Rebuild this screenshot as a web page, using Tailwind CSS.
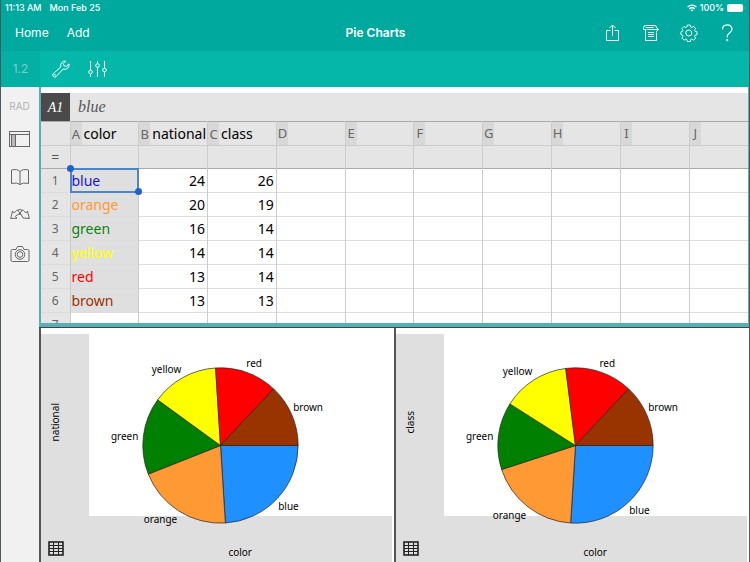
<!DOCTYPE html>
<html lang="en">
<head>
    <meta charset="UTF-8">
    <meta name="viewport" content="width=device-width, initial-scale=1.0">
    <title>Pie Charts</title>
    <script src="https://cdn.jsdelivr.net/npm/@tailwindcss/browser@4"></script>
</head>
<body class="bg-white font-['Inter','Liberation_Sans',sans-serif]">
    <div class="flex flex-col h-screen overflow-hidden border-x border-[#4a5a5a]">

        <!-- Status bar and title bar -->
        <header class="bg-[#00a99d] text-white shrink-0">
            <div class="flex items-center justify-between h-[15px] pl-1 pr-1 text-[9px] font-medium">
                <div class="flex gap-2">
                    <span>11:13 AM</span>
                    <span>Mon Feb 25</span>
                </div>
                <div class="flex items-center gap-[3px]">
                    <svg class="w-[10px] h-[8px]" viewBox="0 0 10 8" fill="none" stroke="white" stroke-width="1.4">
                        <path d="M.6 3a6.2 6.2 0 0 1 8.8 0M2.3 4.9a3.8 3.8 0 0 1 5.4 0"/>
                        <path d="M5 7.6 3.6 6.2a2 2 0 0 1 2.8 0z" fill="white" stroke="none"/>
                    </svg>
                    <span>100%</span>
                    <svg class="w-[18px] h-[8px]" viewBox="0 0 18 8">
                        <rect x="0" y="0" width="16" height="8" rx="2" fill="white"/>
                        <path d="M16.8 2.6q1.2 1.4 0 2.8z" fill="white" opacity=".6"/>
                    </svg>
                </div>
            </div>
            <div class="grid grid-cols-3 items-center h-9 pl-[14px] pr-[13px] text-[12px]">
                <nav class="flex gap-[18px]">
                    <button type="button">Home</button>
                    <button type="button">Add</button>
                </nav>
                <h1 class="text-center font-semibold">Pie Charts</h1>
                <div class="flex justify-end gap-5">
                    <button type="button" aria-label="Share">
                        <svg class="w-[18px] h-[18px]" viewBox="0 0 18 18" fill="none" stroke="white">
                            <path d="M6.5 6.5h-4v10h12v-10h-4M8.5 12V1M5.5 4l3-3 3 3"/>
                        </svg>
                    </button>
                    <button type="button" aria-label="Document">
                        <svg class="w-[18px] h-[18px]" viewBox="0 0 18 18" fill="none" stroke="white">
                            <path d="M3.5 5.500H1.500v-2q0-2 2-2h9q2 0 2 2M3.500 3.500h8M4.500 5.500h12M14 3l2.500 2.500L14 8M3.500 5.500v11h11V8.500"/>
                            <path d="M6 8.500h6M6 10.500h6M6 12.500h6"/>
                        </svg>
                    </button>
                    <button type="button" aria-label="Settings">
                        <svg class="w-[18px] h-[18px]" viewBox="0 0 18 18" fill="none" stroke="white" stroke-linejoin="round">
                            <path d="M7.400 1h3.200l.5 2.200 1.200.5 1.900-1.200 2.300 2.300-1.200 1.900.5 1.200 2.200.5v3.200l-2.200.5-.5 1.200 1.200 1.900-2.300 2.300-1.900-1.200-1.200.5-.5 2.200H7.400l-.5-2.200-1.200-.5-1.900 1.200-2.300-2.300 1.200-1.900-.5-1.200L.500 11.600V8.400l1.700-.5.5-1.200-1.200-1.900 2.300-2.300 1.900 1.200 1.200-.5z" transform="translate(.5 .1) scale(.92)"/>
                            <circle cx="8.800" cy="9" r="3"/>
                        </svg>
                    </button>
                    <button type="button" aria-label="Help">
                        <svg class="w-[18px] h-[18px]" viewBox="0 0 18 18" fill="none" stroke="white" stroke-width="1.200">
                            <path d="M4.500 5.500c0-6 9.500-6 9.500-.5 0 4-4.800 3.800-4.800 7.500v1"/>
                            <circle cx="9.200" cy="16.200" r=".5" fill="white"/>
                        </svg>
                    </button>
                </div>
            </div>
        </header>

        <!-- Tools -->
        <div class="flex items-center h-9 shrink-0 bg-[#05b7a9] text-white">
            <div class="flex items-center justify-center self-stretch w-[39px] bg-[#04afa3] text-[12px] text-white/45">1.2</div>
            <button type="button" class="ml-3" aria-label="Tools">
                <svg class="w-[18px] h-[18px]" viewBox="0 0 18 18" fill="none" stroke="white" stroke-linejoin="round">
                    <path d="M13.800 1.100a4.500 4.500 0 0 0-5 5.800L1.300 13.600a2 2 0 0 0 2.900 2.900l6.900-7.400a4.500 4.500 0 0 0 5.900-5.200l-2.800 2.500-2.300-.6-.6-2.200z"/>
                    <circle cx="3" cy="14.900" r=".4"/>
                </svg>
            </button>
            <button type="button" class="ml-[18px]" aria-label="Adjust">
                <svg class="w-[20px] h-[18px]" viewBox="0 0 20 18" fill="none" stroke="white">
                    <path d="M2.500 1v9M2.500 14v3M9.500 1v2.500M9.500 7.500V17M16.500 1v7M16.500 12v5"/>
                    <circle cx="2.500" cy="12" r="1.800"/><circle cx="9.500" cy="5.500" r="1.800"/><circle cx="16.500" cy="10" r="1.800"/>
                </svg>
            </button>
        </div>

        <div class="flex flex-1 min-h-0">
            <!-- Sidebar -->
            <aside class="flex flex-col items-center w-[38px] shrink-0 bg-[#f1f1f1] pt-[11px] pr-px">
                <button type="button" class="text-[10px] leading-4 text-[#b0b0b0]">RAD</button>
                <button type="button" class="mt-4" aria-label="Pages">
                    <svg class="block w-[22px] h-[18px]" viewBox="0 0 22 18" fill="none" stroke="#666">
                        <rect x=".5" y="1.500" width="20" height="15"/>
                        <path d="M.5 4.500h20"/>
                        <rect x="2.500" y="4.500" width="4" height="12" fill="#bbb"/>
                    </svg>
                </button>
                <button type="button" class="mt-5" aria-label="Catalog">
                    <svg class="block w-[20px] h-[18px]" viewBox="0 0 20 18" fill="none" stroke="#666">
                        <path d="M10 3.500Q7 .500 1.500 2v13.500Q7 14 10 16.500q3-2.500 8.500-1V2Q13 .500 10 3.500v13"/>
                    </svg>
                </button>
                <button type="button" class="mt-5" aria-label="Undo and redo">
                    <svg class="block w-[20px] h-[16px]" viewBox="0 0 20 16" fill="none" stroke="#666" stroke-linejoin="round">
                        <path d="M2.500 5 .7 12.500l6.300-.3-1.700-1.900Q8 7.500 11 8.200L13 12l6.300.5L17.500 5l-1.600 2Q13.500 3.500 10 3.500T4.100 7z"/>
                        <path d="M7.500 4 11 8.200M12.500 4 9 8.200"/>
                    </svg>
                </button>
                <button type="button" class="mt-[23px]" aria-label="Snapshot">
                    <svg class="block w-[20px] h-[18px]" viewBox="0 0 20 18" fill="none" stroke="#666">
                        <path d="M2.500 4.500H6l1.500-3h5l1.500 3h3.500q1.500 0 1.500 1.500v9q0 1.500-1.500 1.500h-15Q1 16.500 1 15V6q0-1.500 1.500-1.500z"/>
                        <circle cx="10" cy="9.500" r="4.800"/><circle cx="10" cy="9.500" r="2.800"/>
                    </svg>
                </button>
            </aside>

            <main class="flex flex-col flex-1 min-w-0">
                <!-- Spreadsheet -->
                <section class="flex flex-col h-[240px] shrink-0 border-l-2 border-r border-b-4 border-[#55b0b8] pt-[6px] overflow-hidden">
                    <div class="flex h-[28px] shrink-0 bg-[#e5e5e5] font-['Liberation_Serif',serif] italic">
                        <div class="flex items-center justify-center w-[29px] bg-[#4a4a4a] text-white text-[14px]">A1</div>
                        <input type="text" value="blue" aria-label="Cell A1" class="flex-1 min-w-0 pl-2 text-[16px] text-[#555] outline-none">
                    </div>
                    <div class="flex-1 min-h-0 overflow-hidden">
                        <table class="table-fixed border-collapse w-[calc(100%+10px)] font-['Noto_Sans','Open_Sans',sans-serif] text-[14px] leading-5">
                            <thead class="bg-[#e5e5e5]">
                                <tr class="h-6 border-y border-t-[#aaa] border-b-[#ccc]">
                                    <th class="w-[29px] border-r border-[#ccc]"></th>
                                    <th class="p-0 border-r border-[#ccc] font-normal"><div class="flex h-[23px] items-center"><span class="w-[11px] h-full shrink-0 flex items-center justify-center bg-[#d8d8d8] text-[13px] text-[#666]">A</span><span class="pl-[2px]">color</span></div></th>
                                    <th class="p-0 border-r border-[#ccc] font-normal"><div class="flex h-[23px] items-center"><span class="w-[11px] h-full shrink-0 flex items-center justify-center bg-[#d8d8d8] text-[13px] text-[#666]">B</span><span class="pl-[2px]">national</span></div></th>
                                    <th class="p-0 border-r border-[#ccc] font-normal"><div class="flex h-[23px] items-center"><span class="w-[11px] h-full shrink-0 flex items-center justify-center bg-[#d8d8d8] text-[13px] text-[#666]">C</span><span class="pl-[2px]">class</span></div></th>
                                    <th class="p-0 border-r border-[#ccc] font-normal"><div class="w-[11px] leading-[23px] bg-[#d8d8d8] text-[13px] text-[#666]">D</div></th>
                                    <th class="p-0 border-r border-[#ccc] font-normal"><div class="w-[11px] leading-[23px] bg-[#d8d8d8] text-[13px] text-[#666]">E</div></th>
                                    <th class="p-0 border-r border-[#ccc] font-normal"><div class="w-[11px] leading-[23px] bg-[#d8d8d8] text-[13px] text-[#666]">F</div></th>
                                    <th class="p-0 border-r border-[#ccc] font-normal"><div class="w-[11px] leading-[23px] bg-[#d8d8d8] text-[13px] text-[#666]">G</div></th>
                                    <th class="p-0 border-r border-[#ccc] font-normal"><div class="w-[11px] leading-[23px] bg-[#d8d8d8] text-[13px] text-[#666]">H</div></th>
                                    <th class="p-0 border-r border-[#ccc] font-normal"><div class="w-[11px] leading-[23px] bg-[#d8d8d8] text-[13px] text-[#666]">I</div></th>
                                    <th class="p-0 font-normal"><div class="w-[11px] leading-[23px] bg-[#d8d8d8] text-[13px] text-[#666]">J</div></th>
                                </tr>
                                <tr class="h-[23px] border-b border-[#aaa] text-[#555] divide-x divide-[#ccc]">
                                    <td class="p-0 text-center">=</td><td></td><td></td><td></td><td></td><td></td><td></td><td></td><td></td><td></td><td></td>
                                </tr>
                            </thead>
                            <tbody id="rows"></tbody>
                        </table>
                    </div>
                </section>

                <!-- Charts -->
                <section class="grid grid-cols-2 flex-1 min-h-0 border-t border-[#444]">
                    <div class="relative grid grid-cols-[48px_1fr] grid-rows-[1fr_46px] border-l-2 border-[#555] pt-[6px] pr-[2px]">
                        <div class="flex items-center justify-center bg-[#dfdfdf] pr-5 pb-[6px]">
                            <span class="[writing-mode:vertical-rl] rotate-180 font-['Noto_Sans',sans-serif] text-[10px]">national</span>
                        </div>
                        <div></div>
                        <div class="col-span-2 flex items-center bg-[#dfdfdf] pl-[7px] pt-[22px] pb-1">
                            <svg class="w-4 h-[15px]" viewBox="0 0 16 15" fill="none" stroke="#222"><rect x="1" y="1" width="14" height="13" stroke-width="1.600"/><path d="M1 4.500h14M1 7.500h14M1 10.500h14M5.500 1v13M10.500 1v13"/></svg>
                        </div>
                        <svg id="nationalChart" class="absolute inset-0 w-full h-full font-['Noto_Sans',sans-serif] text-[10px]" viewBox="0 0 354 235"></svg>
                    </div>
                    <div class="relative grid grid-cols-[48px_1fr] grid-rows-[1fr_46px] border-l-2 border-[#555] pt-[6px] pr-[2px]">
                        <div class="flex items-center justify-center bg-[#dfdfdf] pr-5 pb-[6px]">
                            <span class="[writing-mode:vertical-rl] rotate-180 font-['Noto_Sans',sans-serif] text-[10px]">class</span>
                        </div>
                        <div></div>
                        <div class="col-span-2 flex items-center bg-[#dfdfdf] pl-[7px] pt-[22px] pb-1">
                            <svg class="w-4 h-[15px]" viewBox="0 0 16 15" fill="none" stroke="#222"><rect x="1" y="1" width="14" height="13" stroke-width="1.600"/><path d="M1 4.500h14M1 7.500h14M1 10.500h14M5.500 1v13M10.500 1v13"/></svg>
                        </div>
                        <svg id="classChart" class="absolute inset-0 w-full h-full font-['Noto_Sans',sans-serif] text-[10px]" viewBox="0 0 354 235"></svg>
                    </div>
                </section>
            </main>
        </div>
    </div>

    <script>
        const data = [
            { color: 'blue', national: 24, class: 26, text: 'text-[#1414e0]', fill: '#1e90ff' },
            { color: 'orange', national: 20, class: 19, text: 'text-[#ff9933]', fill: '#ff9933' },
            { color: 'green', national: 16, class: 14, text: 'text-[#118011]', fill: '#008000' },
            { color: 'yellow', national: 14, class: 14, text: 'text-[#ffff00]', fill: '#ffff00' },
            { color: 'red', national: 13, class: 14, text: 'text-[#ff0000]', fill: '#ff0000' },
            { color: 'brown', national: 13, class: 13, text: 'text-[#993300]', fill: '#993300' },
        ];

        const rows = document.getElementById('rows');
        const emptyCells = '<td></td>'.repeat(7);

        data.forEach((row, i) => {
            // The first cell is selected
            const selection = i === 0
                ? `<span class="absolute -inset-px border-2 border-[#4a86c8]"></span>
                   <span class="absolute -top-1 -left-1 size-[7px] rounded-full bg-[#1f63c8]"></span>
                   <span class="absolute -bottom-[3px] -right-1 z-10 size-[7px] rounded-full bg-[#1f63c8]"></span>`
                : '';
            rows.innerHTML += `
                <tr class="h-6 border-b border-[#ddd] divide-x divide-[#ccc]">
                    <th class="p-0 bg-[#e5e5e5] text-[12px] font-normal text-[#666]">${i + 1}</th>
                    <td class="p-0 bg-[#dfdfdf] ${row.text}"><div class="relative h-[23px] pl-px leading-6">${row.color}${selection}</div></td>
                    <td class="p-0 pr-[2px] text-right">${row.national}</td>
                    <td class="p-0 pr-[2px] text-right">${row.class}</td>
                    ${emptyCells}
                </tr>`;
        });
        rows.innerHTML += `
            <tr class="h-6 divide-x divide-[#ccc]">
                <th class="p-0 bg-[#e5e5e5] text-[12px] font-normal text-[#666]">7</th>
                <td></td><td></td><td></td>${emptyCells}
            </tr>`;

        function drawPie(id, key, labels) {
            const cx = 180, cy = 118, r = 78;
            const total = data.reduce((sum, row) => sum + row[key], 0);
            let angle = 0;
            let svg = '';
            data.forEach(row => {
                const end = angle + row[key] / total * 2 * Math.PI;
                const x1 = cx + r * Math.cos(angle), y1 = cy + r * Math.sin(angle);
                const x2 = cx + r * Math.cos(end), y2 = cy + r * Math.sin(end);
                svg += `<path d="M${cx} ${cy}L${x1} ${y1}A${r} ${r} 0 0 1 ${x2} ${y2}z" fill="${row.fill}" stroke="#222" stroke-width=".7"/>`;
                angle = end;
            });
            for (const [name, x, y] of labels) {
                svg += `<text x="${x}" y="${y}">${name}</text>`;
            }
            document.getElementById(id).innerHTML = svg;
        }

        drawPie('nationalChart', 'national', [
            ['yellow', 111, 45], ['red', 206, 39], ['brown', 253, 83],
            ['green', 70, 112], ['orange', 103, 196], ['blue', 238, 183], ['color', 188, 229],
        ]);
        drawPie('classChart', 'class', [
            ['yellow', 107, 47], ['red', 204, 39], ['brown', 253, 83],
            ['green', 70, 112], ['orange', 97, 192], ['blue', 234, 187], ['color', 188, 229],
        ]);
    </script>
</body>
</html>
